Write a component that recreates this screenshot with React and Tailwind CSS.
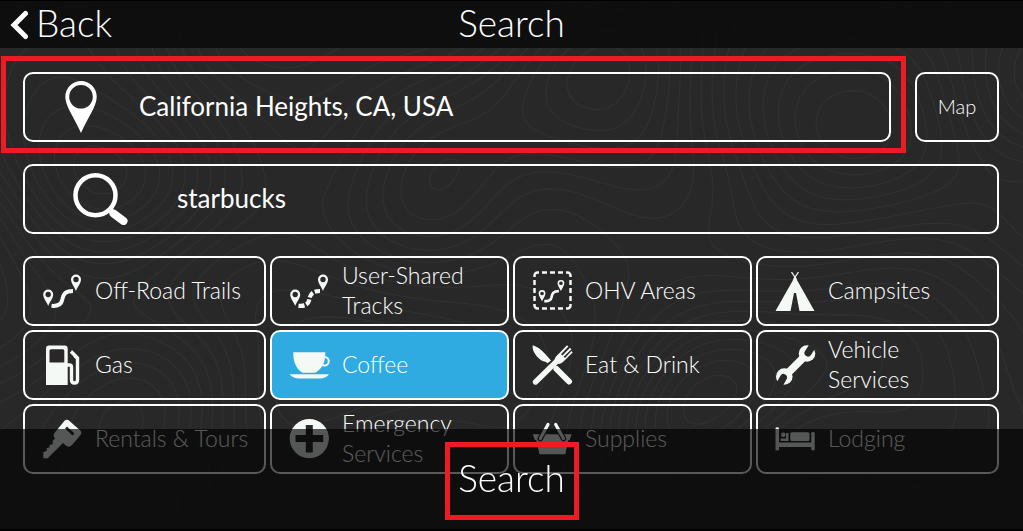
import React from "react";

const PEAKS = [
    [612, 62, 70, 1.3],
    [85, 187, 75, 1.5],
    [710, 387, 65, 1.3],
    [1030, 75, 80, 1.2],
    [140, 400, 70, 1],
    [662, 462, 60, 0.9],
    [435, 190, 60, 0.9],
    [380, 470, 70, 0.9],
    [900, 430, 80, 1],
    [250, 20, 70, -0.8],
    [820, 170, 90, -0.9],
    [300, 330, 90, -0.7],
];

function height(x, y) {
    let h = Math.sin(x / 95 + Math.sin(y / 60) * 1.2) * 0.35 + Math.cos(y / 80 - x / 210) * 0.4 + Math.sin((x + y) / 43) * 0.08;
    for (const [px, py, r, a] of PEAKS) {
        h += a * Math.exp(-((x - px) ** 2 + (y - py) ** 2) / (2 * r * r));
    }
    return h;
}

// Contour lines of the terrain, one short segment per grid cell and level
function contourPath() {
    const step = 8;
    let d = "";
    for (let y = 0; y < 536; y += step) {
        for (let x = 0; x < 1024; x += step) {
            const c = [[x, y], [x + step, y], [x + step, y + step], [x, y + step]];
            const v = c.map(([a, b]) => height(a, b));
            for (let level = -1.6; level < 2.6; level += 0.17) {
                const pts = [];
                for (let i = 0; i < 4; i++) {
                    const j = (i + 1) % 4;
                    if (v[i] < level !== v[j] < level) {
                        const t = (level - v[i]) / (v[j] - v[i]);
                        pts.push((c[i][0] + t * (c[j][0] - c[i][0])).toFixed(1) + " " + (c[i][1] + t * (c[j][1] - c[i][1])).toFixed(1));
                    }
                }
                for (let k = 0; k + 1 < pts.length; k += 2) {
                    d += "M" + pts[k] + "L" + pts[k + 1];
                }
            }
        }
    }
    return d;
}

const CONTOURS = contourPath();

function Icon({ children }) {
    return (
        <svg viewBox="0 0 40 40" className="size-10 shrink-0 overflow-visible" fill="#f4f9f5" aria-hidden="true">
            {children}
        </svg>
    );
}

function TrailPins() {
    return (
        <path
            fillRule="evenodd"
            d="M5.2 18.5a5 5 0 0 1 5 5c0 3.500-3.200 7-5 11.500c-1.800-4.500-5-8-5-11.500a5 5 0 0 1 5-5zM5.200 20.800a2.700 2.700 0 1 0 0 5.400a2.700 2.700 0 1 0 0-5.400zM33 3.500a5 5 0 0 1 5 5c0 3.500-3.200 7-5 11.500c-1.800-4.500-5-8-5-11.500a5 5 0 0 1 5-5zM33 5.800a2.700 2.700 0 1 0 0 5.400a2.700 2.700 0 1 0 0-5.400z"
        />
    );
}

const ROUTE = "M8.500 34.800C14 35.300 18 34 19 29.500C20 24 21.500 20 30 20";

function TrailIcon() {
    return (
        <Icon>
            <TrailPins />
            <path d={ROUTE} fill="none" stroke="#f4f9f5" strokeWidth="4" />
        </Icon>
    );
}

function TrackIcon() {
    return (
        <Icon>
            <TrailPins />
            <path d={ROUTE} fill="none" stroke="#f4f9f5" strokeWidth="4.200" strokeDasharray="6 2" />
        </Icon>
    );
}

function OhvIcon() {
    return (
        <Icon>
            <path
                d="M1.500 6V4.500a3 3 0 0 1 3-3H6M33 1.500h1.500a3 3 0 0 1 3 3V6M37.500 33v1.500a3 3 0 0 1-3 3H33M6 37.500H4.500a3 3 0 0 1-3-3V33M9 1.500h5M17 1.500h5M25 1.500h5M9 37.500h5M17 37.500h5M25 37.500h5M1.500 9v5M1.500 17v5M1.500 25v5M37.500 9v5M37.500 17v5M37.500 25v5"
                fill="none"
                stroke="#f4f9f5"
                strokeWidth="2.500"
            />
            <g transform="translate(5.500 6.500) scale(.68)">
                <TrailPins />
                <path d={ROUTE} fill="none" stroke="#f4f9f5" strokeWidth="4" />
            </g>
        </Icon>
    );
}

function TentIcon() {
    return (
        <Icon>
            <path d="M19 5.500L38.500 40H23.500L20 22h-2L14.500 40H-.5z" />
            <path d="M15.500 1L20.500 8.500M22.500 1L17.500 8.500" stroke="#f4f9f5" strokeWidth="1.300" />
        </Icon>
    );
}

function GasIcon() {
    return (
        <Icon>
            <path fillRule="evenodd" d="M3 40V3.500a3 3 0 0 1 3-3h15.700a3 3 0 0 1 3 3V40zM8 4.200a1.500 1.500 0 0 0-1.500 1.500V17.500h14.800V5.700a1.500 1.500 0 0 0-1.500-1.500z" />
            <path d="M24 20h2.500q2 0 2 2v13q0 3 3 3t3-3V13L28 6.500" fill="none" stroke="#f4f9f5" strokeWidth="3.400" />
            <path d="M28.500 5l7 7v4l-4.500-3.500z" />
        </Icon>
    );
}

function CoffeeIcon() {
    return (
        <Icon>
            <path d="M3.300 7.200h32c.3 9-3 16.500-10 20.500H12.500C6 24 3 16.500 3.300 7.200z" />
            <ellipse cx="34.500" cy="16.200" rx="4.300" ry="4.200" fill="none" stroke="#f4f9f5" strokeWidth="2" />
            <path d="M-.3 29.300H39c-1.500 2.700-5 4.200-9 4.200H9c-4 0-7.800-1.500-9.300-4.200z" />
        </Icon>
    );
}

function EatIcon() {
    return (
        <Icon>
            <path d="M-.3 .3C5 1.500 11 7 18 15.500l-3.500 2.800C13 16.500 12 16.800 9.500 16C4 13-1.300 6-.3 .3z" />
            <path d="M23.500 24L36 36.500" stroke="#f4f9f5" strokeWidth="6" strokeLinecap="round" />
            <path d="M2.500 37L23.500 16.500" stroke="#f4f9f5" strokeWidth="5.400" strokeLinecap="round" />
            <path d="M22 18.500C20.500 14 23 11 25.500 9L34 .3l1.400 1.300-7.300 7.600 1.300 1.300L37 2.800l1.400 1.400-7.700 7.600 1.300 1.300L38.400 6l1.300 1.400L31 16c-2.500 2.500-5 4-9 2.500z" />
        </Icon>
    );
}

function WrenchIcon() {
    return (
        <Icon>
            <mask id="jaws" maskUnits="userSpaceOnUse" x="-2" y="-2" width="44" height="44">
                <rect x="-2" y="-2" width="44" height="44" fill="#fff" />
                <path d="M32 8L39 -3M7.500 32.500L1 44" stroke="#000" strokeWidth="7" strokeLinecap="round" />
            </mask>
            <g mask="url(#jaws)">
                <circle cx="31" cy="8.500" r="8.300" />
                <circle cx="8.300" cy="31.500" r="8.300" />
                <path d="M10 30L30 10" stroke="#f4f9f5" strokeWidth="7.500" />
            </g>
        </Icon>
    );
}

function KeyIcon() {
    return (
        <Icon>
            <path
                fillRule="evenodd"
                d="M21.500 1.800q2.500-2 5 .2l10.800 9.500q2 2 .2 4.500l-8.500 10q-3 3-5.500 1l-3.500-3L4.700 39.300H.3v-6l3.400-1.500v-2.700l2.700-.5v-2.700l3.300-.6v-3.500l2.300-2.300q-2.500-3-.5-5.500zM24 7.500l-2 2 7.500 7 2-2z"
            />
        </Icon>
    );
}

function EmergencyIcon() {
    return (
        <Icon>
            <path fillRule="evenodd" d="M19.300 0a19.600 19.600 0 1 1 0 39.200a19.600 19.600 0 1 1 0-39.200zM15.800 6v10H5.500v7h10.300v10.500h7V23h10.500v-7H22.800V6z" />
        </Icon>
    );
}

function BasketIcon() {
    return (
        <Icon>
            <path d="M-.3 15.300H38.700L36.500 21h-1.200l-3 14.300H6.500L3.200 21H1.800z" />
            <path d="M15 5.500L7.300 19.500M22.700 5.500L30.500 19.500" stroke="#282828" strokeWidth="5.500" strokeLinecap="round" />
            <path d="M15 5.500L7.300 19.500M22.700 5.500L30.500 19.500" stroke="#f4f9f5" strokeWidth="3.200" strokeLinecap="round" />
        </Icon>
    );
}

function BedIcon() {
    return (
        <Icon>
            <path d="M-.5 9.500q0-1.200 1.700-1.200T3 9.500V23.500H35.300V14q0-1 1.700-1t1.700 1V31.300H35.300V28H3V31.300H-.5z" />
            <rect x="14.300" y="13.200" width="19.200" height="8.800" rx="1.500" />
            <circle cx="7.300" cy="15.800" r="2.200" />
            <path d="M4.500 19.500h5.500v-5.500h2.500v8H4.500z" />
        </Icon>
    );
}

const CATEGORIES = [
    { name: "Off-Road Trails", icon: <TrailIcon /> },
    { name: "User-Shared Tracks", icon: <TrackIcon /> },
    { name: "OHV Areas", icon: <OhvIcon /> },
    { name: "Campsites", icon: <TentIcon /> },
    { name: "Gas", icon: <GasIcon /> },
    { name: "Coffee", icon: <CoffeeIcon />, active: true },
    { name: "Eat & Drink", icon: <EatIcon /> },
    { name: "Vehicle Services", icon: <WrenchIcon /> },
    { name: "Rentals & Tours", icon: <KeyIcon /> },
    { name: "Emergency Services", icon: <EmergencyIcon /> },
    { name: "Supplies", icon: <BasketIcon /> },
    { name: "Lodging", icon: <BedIcon /> },
];

export default function App() {
    return (
        <div className="relative isolate min-h-screen bg-[#282828] text-white font-[Lato,sans-serif] font-light">
            <svg viewBox="0 0 1023 531" preserveAspectRatio="xMidYMid slice" className="absolute inset-0 -z-10 w-full h-full" aria-hidden="true">
                <path d={CONTOURS} fill="none" stroke="#303030" strokeWidth="1.200" />
            </svg>

            <header className="grid grid-cols-3 items-center h-12 border-t border-black bg-black/65 text-[37px] leading-none">
                <a href="#" className="flex items-center gap-2 pl-[10px]">
                    <svg viewBox="0 0 18 30" className="w-[18px] h-[30px]" fill="none" aria-hidden="true">
                        <path d="M15.500 3.500L4 15L15.500 26.500" stroke="#fff" strokeWidth="5" strokeLinecap="round" />
                    </svg>
                    <span className="pb-1">Back</span>
                </a>
                <h1 className="pb-1 text-center">Search</h1>
            </header>

            <main className="flex flex-col gap-[22px] pt-6 pl-[23px] pr-6 pb-14">
                <div className="flex gap-6">
                    <div className="relative flex-1">
                        <label className="flex items-center gap-[42px] h-[70px] pl-10 pr-4 border-2 border-white rounded-[10px]">
                            <svg viewBox="0 0 32 52" className="w-8 h-[52px] shrink-0" fill="#fff" aria-hidden="true">
                                <path fillRule="evenodd" d="M16 0a15.700 15.700 0 0 1 15.700 16C31.700 25 23 36 16 52C9 36 .3 25 .3 16A15.700 15.700 0 0 1 16 0zM16 4a11.800 11.800 0 1 0 0 23.600a11.800 11.800 0 1 0 0-23.600z" />
                            </svg>
                            <input type="text" aria-label="Location" defaultValue="California Heights, CA, USA" className="flex-1 min-w-0 pb-0.5 bg-transparent outline-none text-[26px] font-normal" />
                        </label>
                        {/* Highlight */}
                        <div className="absolute -top-4 -left-[22px] -right-[15px] -bottom-[11px] border-5 border-[#ed1c24] pointer-events-none"></div>
                    </div>
                    <button className="w-[84px] h-[70px] pb-0.5 border-2 border-white rounded-[10px] text-xl">Map</button>
                </div>

                <label className="flex items-center gap-12 h-[70px] pl-12 pr-4 border-2 border-white rounded-[10px]">
                    <svg viewBox="0 0 56 52" className="w-14 h-[52px] shrink-0" fill="none" stroke="#fff" aria-hidden="true">
                        <circle cx="22.500" cy="22.300" r="20" strokeWidth="4.500" />
                        <path d="M37 37L40 40" strokeWidth="5" />
                        <path d="M40.500 40.500L50.500 48" strokeWidth="8" strokeLinecap="round" />
                    </svg>
                    <input type="text" aria-label="Search term" defaultValue="starbucks" className="flex-1 min-w-0 pb-0.5 bg-transparent outline-none text-[26px] font-normal" />
                </label>

                <div className="grid grid-cols-[243fr_239fr_239fr_243fr] gap-1">
                    {CATEGORIES.map((c) => (
                        <button
                            key={c.name}
                            className={`flex items-center gap-3 h-[70px] pl-[18px] pr-3 border-2 border-white rounded-[10px] text-left text-[23px] leading-[30px] ${c.active ? "bg-[#2fabe1]" : ""}`}
                        >
                            {c.icon}
                            <span className="pb-0.5">{c.name}</span>
                        </button>
                    ))}
                </div>
            </main>

            <footer className="fixed bottom-0 inset-x-0 flex justify-center h-[102px] pt-[13px] border-b-2 border-black bg-black/65">
                <button className="w-[134px] h-[78px] pb-2 border-5 border-[#ed1c24] text-[37px] leading-none">Search</button>
            </footer>
        </div>
    );
}
